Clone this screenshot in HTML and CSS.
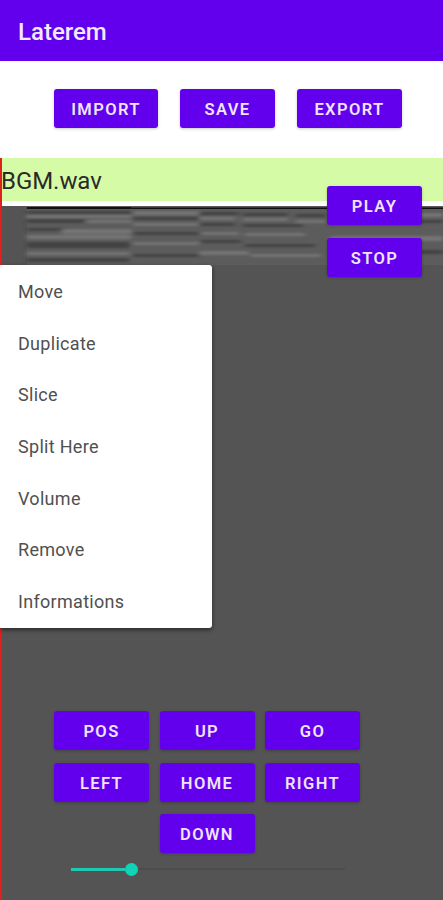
FILE: index.html
```html
<!DOCTYPE html>
<html lang="en">
<head>
<meta charset="utf-8">
<title>Laterem</title>
<link rel="stylesheet" href="styles.css">
</head>
<body>
<div class="app">
  <header class="appbar">Laterem</header>
  <div class="toolbar">
    <button class="btn btn-import">IMPORT</button>
    <button class="btn btn-save">SAVE</button>
    <button class="btn btn-export">EXPORT</button>
  </div>
  <main class="workspace">
    <div class="track-name">BGM.wav</div>
    <div class="track-gap"></div>
    <svg class="wave" viewBox="0 0 443 60" preserveAspectRatio="none" aria-hidden="true">
      <defs><filter id="soft" x="-2%" y="-10%" width="104%" height="120%"><feGaussianBlur stdDeviation="2.5 1.1"/></filter></defs>
      <rect class="w-bg" x="25" y="0" width="418" height="59"/>
      <g filter="url(#soft)">
        <rect class="w-d" x="25" y="5" width="105" height="3"/>
        <rect class="w-l" x="25" y="9" width="105" height="3"/>
        <rect class="w-d" x="25" y="13" width="58" height="4"/>
        <rect class="w-l" x="85" y="14" width="45" height="3"/>
        <rect class="w-d" x="25" y="22" width="38" height="3"/>
        <rect class="w-l" x="60" y="23" width="70" height="5"/>
        <rect class="w-l" x="25" y="29" width="105" height="4"/>
        <rect class="w-d" x="25" y="36" width="103" height="6"/>
        <rect class="w-l" x="25" y="46" width="103" height="3"/>
        <rect class="w-d" x="25" y="52" width="103" height="4"/>
        <rect class="w-l" x="132" y="5" width="66" height="4"/>
        <rect class="w-d" x="132" y="11" width="66" height="3"/>
        <rect class="w-l" x="132" y="17" width="66" height="3"/>
        <rect class="w-d" x="132" y="26" width="66" height="3"/>
        <rect class="w-l" x="132" y="36" width="66" height="3"/>
        <rect class="w-d" x="132" y="48" width="66" height="3"/>
        <rect class="w-d" x="198" y="6" width="40" height="3"/>
        <rect class="w-l" x="198" y="11" width="36" height="3"/>
        <rect class="w-d" x="198" y="17" width="36" height="3"/>
        <rect class="w-l" x="200" y="26" width="38" height="3"/>
        <rect class="w-d" x="200" y="34" width="40" height="3"/>
        <rect class="w-l" x="198" y="45" width="50" height="4"/>
        <rect class="w-d" x="242" y="7" width="45" height="3"/>
        <rect class="w-l" x="242" y="12" width="45" height="3"/>
        <rect class="w-d" x="242" y="18" width="60" height="3"/>
        <rect class="w-l" x="244" y="27" width="60" height="3"/>
        <rect class="w-d" x="244" y="38" width="70" height="3"/>
        <rect class="w-l" x="250" y="48" width="70" height="3"/>
        <rect class="w-d" x="295" y="8" width="30" height="3"/>
        <rect class="w-l" x="295" y="14" width="30" height="3"/>
        <rect class="w-l" x="330" y="7" width="113" height="4"/>
        <rect class="w-d" x="330" y="14" width="113" height="3"/>
        <rect class="w-l" x="330" y="30" width="113" height="5"/>
        <rect class="w-d" x="330" y="44" width="113" height="4"/>
      </g>
      <rect class="w-top" x="25" y="1" width="105" height="2"/>
      <rect class="w-top" x="130" y="1.5" width="313" height="1.5"/>
    </svg>
    <div class="rest">
      <div class="pad">
        <button class="btn pad-btn">POS</button>
        <button class="btn pad-btn">UP</button>
        <button class="btn pad-btn">GO</button>
        <button class="btn pad-btn">LEFT</button>
        <button class="btn pad-btn">HOME</button>
        <button class="btn pad-btn">RIGHT</button>
        <button class="btn pad-btn pad-down">DOWN</button>
      </div>
      <div class="slider">
        <div class="slider-fill"></div>
        <div class="slider-thumb"></div>
        <div class="slider-rest"></div>
      </div>
    </div>
    <div class="playback">
      <button class="btn pad-btn">PLAY</button>
      <button class="btn pad-btn">STOP</button>
    </div>
    <ul class="menu">
      <li>Move</li>
      <li>Duplicate</li>
      <li>Slice</li>
      <li>Split Here</li>
      <li>Volume</li>
      <li>Remove</li>
      <li>Informations</li>
    </ul>
  </main>
</div>
</body>
</html>
```

FILE: styles.css
```css
* { box-sizing: border-box; }
html, body { margin: 0; padding: 0; height: 100%; background: #fff; overflow: hidden; }
body { font-family: Roboto, "Liberation Sans", sans-serif; }
.app { width: 443px; height: 900px; display: flex; flex-direction: column; }
.appbar {
  height: 61px;
  flex: none;
  background: #6200ee;
  color: #f3e9ff;
  font-size: 24px;
  font-weight: 500;
  line-height: 64px;
  padding-left: 18px;
}
.toolbar {
  height: 97px;
  flex: none;
  display: flex;
  gap: 22px;
  padding: 28px 0 0 54px;
  align-items: flex-start;
}
.btn {
  border: 0;
  margin: 0;
  padding: 2px 0 0;
  height: 39px;
  background: #6200ee;
  color: #efe4fb;
  border-radius: 3px;
  font-family: inherit;
  font-size: 16.5px;
  font-weight: 600;
  letter-spacing: 1.4px;
  box-shadow: 0 1px 3px rgba(0, 0, 0, 0.22);
}
.btn-import { width: 104px; }
.btn-save { width: 95px; }
.btn-export { width: 105px; }
.workspace {
  position: relative;
  flex: 1;
  display: flex;
  flex-direction: column;
  border-left: 2px solid #e01f1f;
  background: #545454;
}
.track-name {
  height: 43px;
  flex: none;
  background: #d6fba6;
  color: #2a2a2a;
  font-size: 24px;
  letter-spacing: -0.05px;
  line-height: 47px;
  text-indent: -1px;
}
.track-gap { height: 5px; flex: none; background: #fff; }
.wave { display: block; flex: none; width: 441px; height: 60px; }
.w-bg { fill: #5c5c5c; }
.w-d { fill: #434343; }
.w-l { fill: #747474; }
.w-top { fill: #111; }
.rest { flex: 1; display: flex; flex-direction: column; padding: 445px 0 0 52px; }
.pad {
  display: grid;
  grid-template-columns: repeat(3, 95px);
  grid-auto-rows: 39px;
  column-gap: 10.5px;
  row-gap: 12.5px;
}
.pad-btn { width: 95px; }
.pad-down { grid-column: 2; }
.slider { position: relative; display: flex; align-items: center; width: 274px; height: 13px; margin: 9.5px 0 0 17px; }
.slider-fill { width: 54px; height: 3px; background: #1fc8b0; flex: none; }
.slider-thumb { width: 13px; height: 13px; border-radius: 50%; background: #12d3b6; flex: none; }
.slider-rest { flex: 1; height: 2px; background: #4c4c4c; }
.playback {
  position: absolute;
  top: 28px;
  left: 325px;
  display: flex;
  flex-direction: column;
  gap: 12.5px;
}
.menu {
  position: absolute;
  top: 107px;
  left: -2px;
  width: 212px;
  height: 363px;
  margin: 0;
  padding: 1px 0 0;
  list-style: none;
  background: #fff;
  border-radius: 0 3px 3px 0;
  box-shadow: 0 2px 4px rgba(0, 0, 0, 0.5);
  color: #505050;
  font-size: 18px;
  letter-spacing: 0.3px;
}
.menu li { height: 51.7px; line-height: 52px; padding-left: 18px; }
```
